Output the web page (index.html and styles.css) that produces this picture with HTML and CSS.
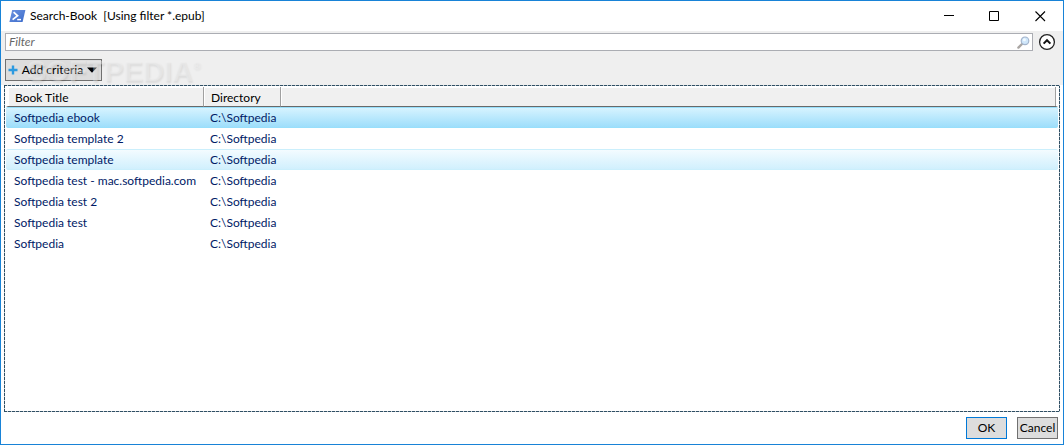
FILE: index.html
```html
<!DOCTYPE html>
<html lang="en">
<head>
    <meta charset="UTF-8">
    <meta name="viewport" content="width=device-width, initial-scale=1.0">
    <title>Search-Book</title>
    <link rel="stylesheet" href="styles.css">
</head>
<body>
    <div class="window">
        <header class="titlebar">
            <svg class="app-icon" width="17" height="14" viewBox="0 0 17 14">
                <defs>
                    <linearGradient id="ps" x1="0" y1="0" x2="1" y2="1">
                        <stop offset="0" stop-color="#6f94e0"/>
                        <stop offset="1" stop-color="#3a6bcb"/>
                    </linearGradient>
                </defs>
                <path d="M3.2 1H16.4L13.6 13H0.4Z" fill="url(#ps)"/>
                <path d="M4.6 3.2L8.6 6.8L3.6 10.6" fill="none" stroke="#fff" stroke-width="1.7"/>
                <path d="M8.2 10.6H12" stroke="#fff" stroke-width="1.5"/>
            </svg>
            <h1 class="title">Search-Book&nbsp; [Using filter *.epub]</h1>
            <div class="window-controls">
                <button type="button" aria-label="Minimize">
                    <svg width="11" height="11" viewBox="0 0 11 11"><path d="M1 4.5H11" stroke="#000"/></svg>
                </button>
                <button type="button" aria-label="Maximize">
                    <svg width="11" height="11" viewBox="0 0 11 11"><path d="M0.5 0.5H9.5V9.5H0.5Z" fill="none" stroke="#000"/></svg>
                </button>
                <button type="button" aria-label="Close">
                    <svg width="11" height="11" viewBox="0 0 11 11"><path d="M0.5 0.5L10 10M10 0.5L0.5 10" stroke="#000" stroke-width="1.1"/></svg>
                </button>
            </div>
        </header>

        <section class="toolbar">
            <div class="filter-row">
                <div class="filter-box">
                    <input type="text" aria-label="Filter" placeholder="Filter">
                    <svg width="13" height="13" viewBox="0 0 13 13">
                        <path d="M1.4 11.6L5 8" stroke="#aaa6a3" stroke-width="2.4" stroke-linecap="round"/>
                        <circle cx="8" cy="4.8" r="3.8" fill="#cfe6fa" stroke="#a3b4cc" stroke-width="1.2"/>
                        <circle cx="7.4" cy="3.8" r="1.5" fill="#f2faff"/>
                    </svg>
                </div>
                <button type="button" class="expander" aria-label="Collapse">
                    <svg width="18" height="18" viewBox="0 0 18 18">
                        <circle cx="9" cy="9" r="7.4" fill="#fff" stroke="#222" stroke-width="1.3"/>
                        <path d="M5.6 10.6L9 7.2L12.4 10.6" fill="none" stroke="#111" stroke-width="2"/>
                    </svg>
                </button>
            </div>
            <button type="button" class="add-criteria">
                <svg width="10" height="10" viewBox="0 0 10 10"><path d="M5 0.5V9.5M0.5 5H9.5" stroke="#2d9ae0" stroke-width="2.4"/></svg>
                <span>Add criteria</span>
                <svg width="10" height="6" viewBox="0 0 10 6"><path d="M0 0.5H10L5 5.8Z" fill="#000"/></svg>
            </button>
            <div class="watermark">SOFTPEDIA<sup>®</sup></div>
        </section>

        <main class="content">
            <div class="results">
                <table>
                    <colgroup>
                        <col class="col-title">
                        <col class="col-directory">
                        <col>
                    </colgroup>
                    <thead>
                        <tr><th>Book Title</th><th>Directory</th><th></th></tr>
                    </thead>
                    <tbody>
                        <tr class="selected"><td>Softpedia ebook</td><td>C:\Softpedia</td><td></td></tr>
                        <tr><td>Softpedia template 2</td><td>C:\Softpedia</td><td></td></tr>
                        <tr class="hover"><td>Softpedia template</td><td>C:\Softpedia</td><td></td></tr>
                        <tr><td>Softpedia test - mac.softpedia.com</td><td>C:\Softpedia</td><td></td></tr>
                        <tr><td>Softpedia test 2</td><td>C:\Softpedia</td><td></td></tr>
                        <tr><td>Softpedia test</td><td>C:\Softpedia</td><td></td></tr>
                        <tr><td>Softpedia</td><td>C:\Softpedia</td><td></td></tr>
                    </tbody>
                </table>
            </div>
        </main>

        <footer class="actions">
            <button type="button" class="default">OK</button>
            <button type="button">Cancel</button>
        </footer>
    </div>
</body>
</html>
```
FILE: styles.css
```css
* {
    box-sizing: border-box;
}
body {
    margin: 0;
    font-family: Lato, "Open Sans", sans-serif;
    font-size: 12px;
    line-height: 16px;
    color: #000;
}
button,
input {
    font: inherit;
    color: inherit;
    margin: 0;
    padding: 0;
}
svg {
    display: block;
    flex: none;
}
.window {
    display: flex;
    flex-direction: column;
    min-height: 100vh;
    background-color: #fff;
    border: 1px solid #1883d7;
}

/* title bar */
.titlebar {
    display: flex;
    align-items: center;
    height: 30px;
    padding-left: 8px;
}
.title {
    flex: 1;
    margin: 0 0 0 4px;
    font-size: 12px;
    font-weight: 400;
}
.window-controls {
    display: flex;
}
.window-controls button {
    display: flex;
    align-items: center;
    justify-content: center;
    width: 46px;
    height: 28px;
    border: none;
    background: none;
}

/* filter and criteria */
.toolbar {
    position: relative;
    padding: 2px 7px 4px 4px;
    height: 54px;
    background-color: #efefef;
}
.filter-row {
    display: flex;
    align-items: center;
    gap: 5px;
}
.filter-box {
    display: flex;
    align-items: center;
    flex: 1;
    height: 18px;
    padding: 0 2px 0 3px;
    background-color: #fff;
    border: 1px solid #abadb3;
}
.filter-box input {
    flex: 1;
    height: 16px;
    border: none;
    outline: none;
    background: none;
}
.filter-box input::placeholder {
    color: #666;
    font-style: italic;
    opacity: 1;
}
.expander {
    border: none;
    background: none;
}
.add-criteria {
    display: flex;
    align-items: center;
    justify-content: space-between;
    width: 97px;
    height: 22px;
    margin-top: 8px;
    padding: 0 4px 0 2px;
    background-color: #ddd;
    border: 1px solid #707070;
}
.watermark {
    position: absolute;
    top: 24px;
    left: 26px;
    font-family: "Liberation Sans", Arial, sans-serif;
    font-size: 29px;
    font-weight: 700;
    line-height: 32px;
    color: rgba(242, 242, 242, 0.4);
    text-shadow: 1px 2px 2px rgba(0, 0, 0, 0.08);
    pointer-events: none;
}
.watermark sup {
    font-size: 10px;
    line-height: 0;
    vertical-align: 12px;
}

/* result list */
.content {
    display: flex;
    flex: 1;
    padding: 0 3px;
}
.results {
    flex: 1;
    padding: 2px;
    background:
        repeating-linear-gradient(to right, #2f4f64 0 3px, #c4ccd2 3px 4px) top / 100% 1px no-repeat,
        repeating-linear-gradient(to right, #2f4f64 0 3px, #c4ccd2 3px 4px) bottom / 100% 1px no-repeat,
        repeating-linear-gradient(to bottom, #2f4f64 0 3px, #c4ccd2 3px 4px) left / 1px 100% no-repeat,
        repeating-linear-gradient(to bottom, #2f4f64 0 3px, #c4ccd2 3px 4px) right / 1px 100% no-repeat;
}
table {
    width: 100%;
    table-layout: fixed;
    border-collapse: separate;
    border-spacing: 0;
}
.col-title {
    width: 198px;
}
.col-directory {
    width: 77px;
}
th,
td {
    height: 21px;
    text-align: left;
    white-space: nowrap;
}
th {
    height: 20px;
    padding: 2px 7px 0;
    font-weight: 400;
    background-color: #f0f0f0;
    border-right: 1px solid #a0a0a0;
    border-bottom: 1px solid #696969;
    box-shadow: inset 1px 1px #fff;
}
th:first-child {
    border-left: 2px solid #fff;
}
th:last-child {
    border-right: 2px solid #fff;
    box-shadow: inset -1px 0 #a0a0a0, inset 1px 1px #fff;
}
td {
    padding: 0 6px;
    color: #001a66;
    border: 0 solid transparent;
    border-width: 1px 0;
}
td:first-child {
    padding-left: 8px;
    border-radius: 2px 0 0 2px;
}
td:last-child {
    border-radius: 0 2px 2px 0;
}
.selected td {
    background: linear-gradient(#d9f4ff, #9bddfb) border-box;
    border-color: #98dffb;
}
.hover td {
    background: linear-gradient(#f5fcff, #cfeffd) border-box;
    border-color: #cbeffc;
}

/* dialog buttons */
.actions {
    display: flex;
    justify-content: flex-end;
    gap: 10px;
    padding: 5px 5px 5px 0;
}
.actions button {
    width: 41px;
    height: 22px;
    background-color: #ddd;
    border: 1px solid #707070;
}
.actions .default {
    border-color: #0078d7;
}
```
